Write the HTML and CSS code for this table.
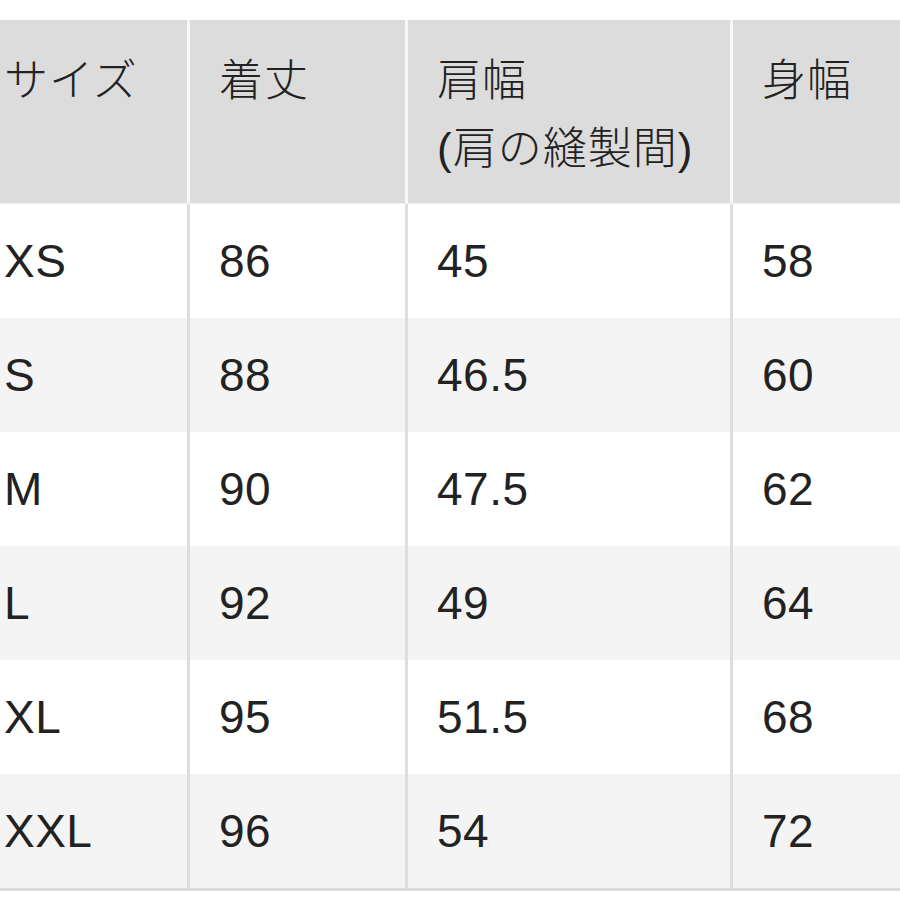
FILE: index.html
```html
<!DOCTYPE html>
<html lang="ja">
<head>
<meta charset="utf-8">
<title>サイズ表</title>
<link rel="stylesheet" href="styles.css">
</head>
<body>
<div class="sheet">
  <div class="row head">
    <div class="cell">サイズ</div>
    <div class="cell">着丈</div>
    <div class="cell">肩幅<br>(肩の縫製間)</div>
    <div class="cell">身幅</div>
  </div>
  <div class="row">
    <div class="cell">XS</div><div class="cell">86</div><div class="cell">45</div><div class="cell">58</div>
  </div>
  <div class="row alt">
    <div class="cell">S</div><div class="cell">88</div><div class="cell">46.5</div><div class="cell">60</div>
  </div>
  <div class="row">
    <div class="cell">M</div><div class="cell">90</div><div class="cell">47.5</div><div class="cell">62</div>
  </div>
  <div class="row alt">
    <div class="cell">L</div><div class="cell">92</div><div class="cell">49</div><div class="cell">64</div>
  </div>
  <div class="row">
    <div class="cell">XL</div><div class="cell">95</div><div class="cell">51.5</div><div class="cell">68</div>
  </div>
  <div class="row alt last">
    <div class="cell">XXL</div><div class="cell">96</div><div class="cell">54</div><div class="cell">72</div>
  </div>
</div>
</body>
</html>
```

FILE: styles.css
```css
html, body {
  margin: 0;
  padding: 0;
  background: #ffffff;
}
body {
  font-family: "Liberation Sans", "Noto Sans CJK JP", sans-serif;
  color: #222222;
  overflow: hidden;
}
.sheet {
  padding-top: 20px;
  display: flex;
  flex-direction: column;
}
.row {
  display: grid;
  grid-template-columns: 187px 218px 325px 1fr;
  height: 114px;
  background: #ffffff;
}
.row.alt {
  background: #f4f4f4;
}
.row.head {
  height: 184px;
  background: #dcdcdc;
  border-bottom: 1px solid #f2f2f2;
  box-sizing: border-box;
}
.cell {
  display: flex;
  align-items: center;
  padding-left: 29px;
  font-size: 46px;
  letter-spacing: 0.5px;
  border-left: 3px solid #dedede;
}
.cell:first-child {
  border-left: none;
  padding-left: 4px;
}
.head .cell {
  display: block;
  padding-top: 27px;
  font-size: 44px;
  line-height: 68px;
  letter-spacing: 1px;
  font-weight: 300;
  border-left-color: #f7f7f7;
}
.head .cell:first-child {
  padding-left: 4px;
}
.row.last {
  border-bottom: 3px solid #dcdcdc;
}
```
